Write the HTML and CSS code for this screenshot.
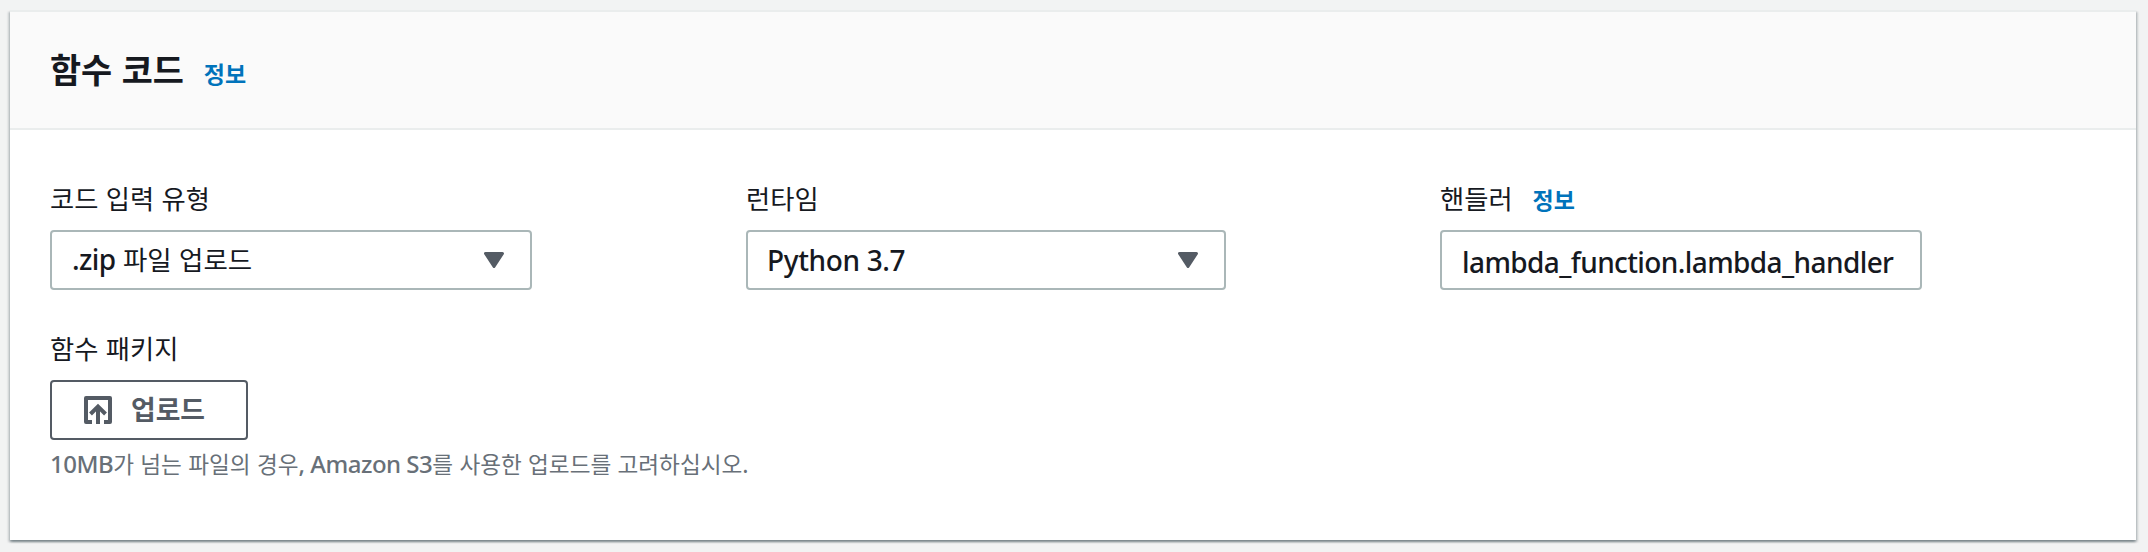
FILE: index.html
```html
<!DOCTYPE html>
<html lang="ko">
<head>
<meta charset="utf-8">
<title>함수 코드</title>
<link rel="stylesheet" href="styles.css">
</head>
<body>
<section class="card">
  <header class="card-header">
    <h2 class="title">함수 코드</h2>
    <a class="info">정보</a>
  </header>
  <div class="card-body">
    <div class="fields">
      <div class="field">
        <div class="label-row"><span class="label">코드 입력 유형</span></div>
        <div class="control select">
          <span class="value zip"><span class="latin">.zip</span> 파일 업로드</span>
          <svg class="caret" width="20" height="16" viewBox="0 0 20 16"><path d="M1.5 1.5h17L10 14.5z" fill="#545b64" stroke="#545b64" stroke-width="3" stroke-linejoin="round"/></svg>
        </div>
      </div>
      <div class="field runtime">
        <div class="label-row"><span class="label">런타임</span></div>
        <div class="control select">
          <span class="value latin python">Python 3.7</span>
          <svg class="caret" width="20" height="16" viewBox="0 0 20 16"><path d="M1.5 1.5h17L10 14.5z" fill="#545b64" stroke="#545b64" stroke-width="3" stroke-linejoin="round"/></svg>
        </div>
      </div>
      <div class="field">
        <div class="label-row"><span class="label">핸들러</span><a class="info">정보</a></div>
        <div class="control input"><span class="value latin handler">lambda_function.lambda_handler</span></div>
      </div>
    </div>
    <div class="package">
      <div class="label-row"><span class="label">함수 패키지</span></div>
      <button class="upload" type="button">
        <svg width="28" height="28" viewBox="0 0 28 28" fill="none" stroke="#545b64" stroke-width="4"><path d="M8 26H2V2h24v24h-6" stroke-linejoin="round"/><path d="M14 28V10M6.5 18L14 10.5l7.500 7.500"/></svg>
        <span class="upload-text">업로드</span>
      </button>
      <p class="hint"><span class="latin-s">10MB</span>가 넘는 파일의 경우<span class="latin-s">, Amazon S3</span>를 사용한 업로드를 고려하십시오.</p>
    </div>
  </div>
</section>
</body>
</html>
```

FILE: styles.css
```css
* { box-sizing: border-box; }
body {
  margin: 0;
  padding: 10px 12px 12px 10px;
  height: 552px;
  overflow: hidden;
  background: #f2f3f3;
  color: #16191f;
  font-family: "Noto Sans CJK KR", sans-serif;
  white-space: nowrap;
}
.card {
  height: 530px;
  background: #fff;
  border-top: 2px solid #eaeded;
  box-shadow: 0 2px 2px rgba(0, 28, 36, .3), 2px 2px 2px rgba(0, 28, 36, .15), -2px 2px 2px rgba(0, 28, 36, .15);
}
.card-header {
  display: flex;
  align-items: baseline;
  gap: 20px;
  height: 118px;
  padding: 32px 40px 0;
  background: #fafafa;
  border-bottom: 2px solid #eaeded;
}
.title { margin: 0; font-size: 33.800px; line-height: 50px; font-weight: 700; }
.info { color: #0073bb; font-size: 23px; line-height: 30px; font-weight: 700; }
.card-body { padding: 48px 40px 0; }
.fields { display: grid; grid-template-columns: 696px 694px 482px; }
.field .control { width: 482px; }
.runtime .control { width: 480px; }
.label-row { display: flex; align-items: baseline; gap: 20px; height: 40px; margin-bottom: 12px; }
.label { font-size: 26.300px; line-height: 40px; font-weight: 400; }
.control {
  display: flex;
  align-items: center;
  height: 60px;
  padding: 0 26px 0 20px;
  border: 2px solid #aab7b8;
  border-radius: 4px;
}
.select { justify-content: space-between; }
.value { font-size: 26.500px; line-height: 40px; }
.zip { padding-bottom: 2px; }
.latin, .latin-s { font-family: "Noto Sans", sans-serif; }
.latin { font-size: 28px; font-weight: 500; letter-spacing: -.6px; }
.python { letter-spacing: -.35px; margin-left: -1px; }
.handler { padding-top: 3px; }
.package { margin-top: 38px; }
.upload {
  display: flex;
  align-items: center;
  gap: 19px;
  width: 198px;
  height: 60px;
  padding: 0 0 0 32px;
  background: #fff;
  color: #545b64;
  border: 2px solid #545b64;
  border-radius: 4px;
  font: 700 26.800px/40px "Noto Sans CJK KR", sans-serif;
}
.upload-text { padding-bottom: 3px; }
.hint { margin: 7px 0 0; color: #687078; font-size: 22.600px; line-height: 34px; }
.latin-s { font-size: 24px; font-weight: 500; letter-spacing: -.5px; }
```
